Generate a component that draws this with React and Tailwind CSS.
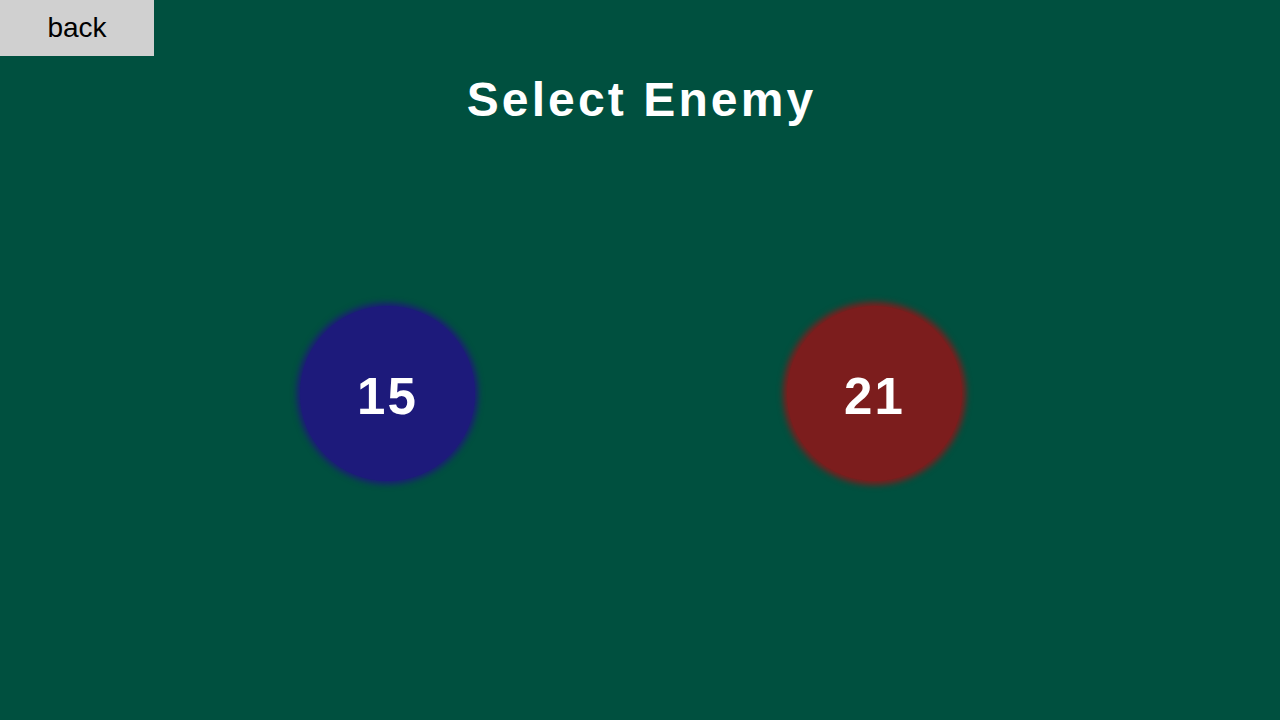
import React from "react";

const enemies = [
  { id: 1, level: 15, color: "bg-[#1d1a7b] shadow-[0_0_6px_3px_#1d1a7b]" },
  { id: 2, level: 21, color: "bg-[#7c1d1d] shadow-[0_0_6px_4px_#7c1d1d]" },
];

export default function App() {
  return (
    <div
      className="w-full h-[720px] bg-[#00503f] overflow-hidden"
      style={{ fontFamily: '"Liberation Sans", Arial, sans-serif' }}
    >
      <button className="block w-[154px] h-[56px] bg-[#d0d0d0] text-black text-[28px] leading-none">
        back
      </button>

      <h1 className="mt-[20px] text-center text-white font-bold text-[48px] leading-none tracking-[0.065em] pl-[3px]">
        Select Enemy
      </h1>

      <div className="flex mt-[182px] pl-[300px] gap-[312px]">
        {enemies.map((e) => (
          <div
            key={e.id}
            className={`w-[175px] h-[175px] rounded-full flex items-center justify-center pt-[6px] ${e.color}`}
          >
            <span className="text-white font-bold text-[51px] leading-none tracking-[0.04em]">
              {e.level}
            </span>
          </div>
        ))}
      </div>
    </div>
  );
}
